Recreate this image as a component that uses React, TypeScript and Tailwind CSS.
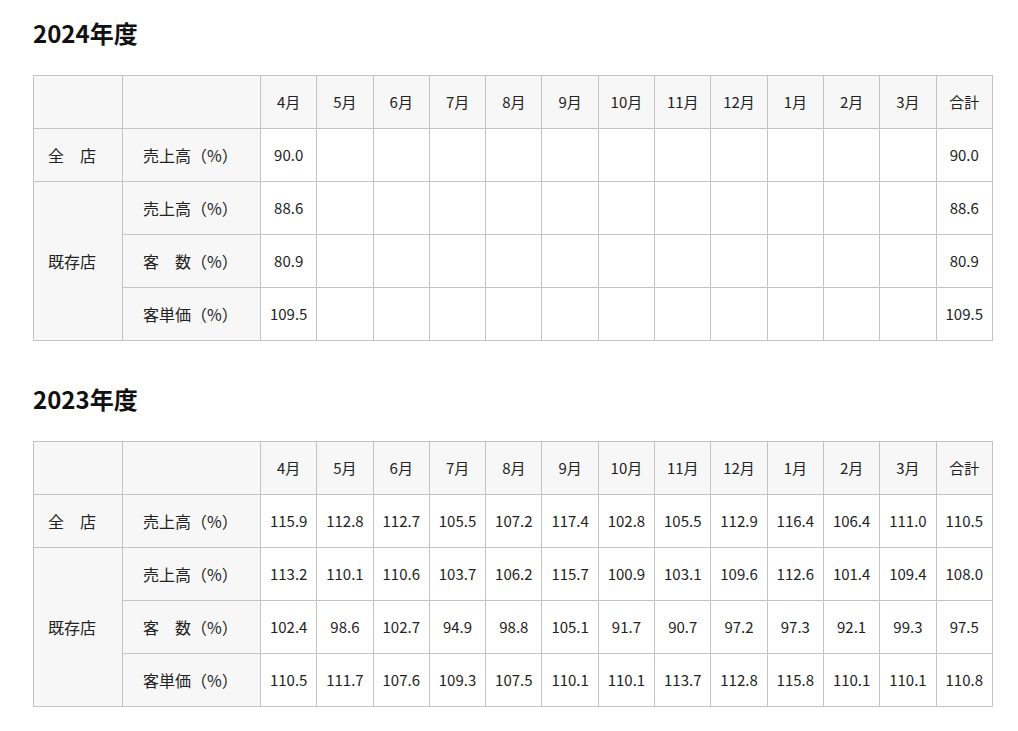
import React from "react";

const months = ["4月", "5月", "6月", "7月", "8月", "9月", "10月", "11月", "12月", "1月", "2月", "3月", "合計"];

type Row = string[];

const data2024: Row[] = [
  ["90.0", "", "", "", "", "", "", "", "", "", "", "", "90.0"],
  ["88.6", "", "", "", "", "", "", "", "", "", "", "", "88.6"],
  ["80.9", "", "", "", "", "", "", "", "", "", "", "", "80.9"],
  ["109.5", "", "", "", "", "", "", "", "", "", "", "", "109.5"],
];

const data2023: Row[] = [
  ["115.9", "112.8", "112.7", "105.5", "107.2", "117.4", "102.8", "105.5", "112.9", "116.4", "106.4", "111.0", "110.5"],
  ["113.2", "110.1", "110.6", "103.7", "106.2", "115.7", "100.9", "103.1", "109.6", "112.6", "101.4", "109.4", "108.0"],
  ["102.4", "98.6", "102.7", "94.9", "98.8", "105.1", "91.7", "90.7", "97.2", "97.3", "92.1", "99.3", "97.5"],
  ["110.5", "111.7", "107.6", "109.3", "107.5", "110.1", "110.1", "113.7", "112.8", "115.8", "110.1", "110.1", "110.8"],
];

const labels = ["売上高（%）", "売上高（%）", "客　数（%）", "客単価（%）"];

const cellB = "border border-[#c4c4c4]";

function YearTable({ title, data }: { title: string; data: Row[] }) {
  return (
    <section>
      <h2 className="text-[24px] font-bold leading-[34px] text-[#111] pl-[33px]">{title}</h2>
      <table className="ml-[33px] mt-[25px] w-[960px] table-fixed border-collapse text-[#222]">
        <colgroup>
          <col className="w-[89px]" />
          <col className="w-[138px]" />
          {months.map((m) => (
            <col key={m} />
          ))}
        </colgroup>
        <thead>
          <tr className="h-[53px] bg-[#f7f7f7]">
            <th className={cellB}></th>
            <th className={cellB}></th>
            {months.map((m) => (
              <th key={m} className={`${cellB} text-[15px] font-normal text-center p-0`}>
                {m}
              </th>
            ))}
          </tr>
        </thead>
        <tbody>
          {data.map((row, i) => (
            <tr key={i} className="h-[53px]">
              {i === 0 && (
                <td className={`${cellB} bg-[#f7f7f7] text-[16px] text-left pl-[14px]`}>全　店</td>
              )}
              {i === 1 && (
                <td rowSpan={3} className={`${cellB} bg-[#f7f7f7] text-[16px] text-left pl-[14px]`}>
                  既存店
                </td>
              )}
              <td className={`${cellB} bg-[#f7f7f7] text-[16px] text-left pl-[20px]`}>{labels[i]}</td>
              {row.map((v, j) => (
                <td key={j} className={`${cellB} text-[15px] text-center p-0`}>
                  {v}
                </td>
              ))}
            </tr>
          ))}
        </tbody>
      </table>
    </section>
  );
}

export default function App() {
  return (
    <div
      className="bg-white min-h-[731px] pt-[16px]"
      style={{ fontFamily: '"Noto Sans CJK JP", "Noto Sans", sans-serif' }}
    >
      <YearTable title="2024年度" data={data2024} />
      <div className="h-[41px]" />
      <YearTable title="2023年度" data={data2023} />
    </div>
  );
}
